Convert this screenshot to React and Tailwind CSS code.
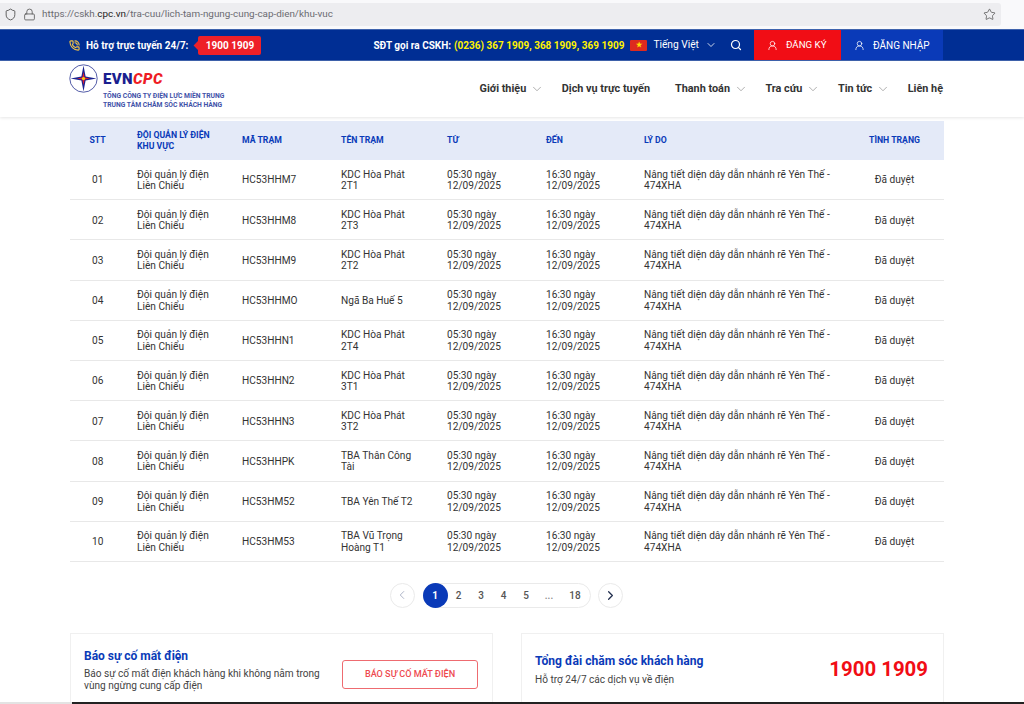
import { ChevronDown, ChevronLeft, ChevronRight, Lock, Search, Shield, Star, UserRound, PhoneCall } from "lucide-react";

const rows = [
  ["01", "HC53HHM7", "KDC Hòa Phát 2T1"],
  ["02", "HC53HHM8", "KDC Hòa Phát 2T3"],
  ["03", "HC53HHM9", "KDC Hòa Phát 2T2"],
  ["04", "HC53HHMO", "Ngã Ba Huế 5"],
  ["05", "HC53HHN1", "KDC Hòa Phát 2T4"],
  ["06", "HC53HHN2", "KDC Hòa Phát 3T1"],
  ["07", "HC53HHN3", "KDC Hòa Phát 3T2"],
  ["08", "HC53HHPK", "TBA Thân Công Tài"],
  ["09", "HC53HM52", "TBA Yên Thế T2"],
  ["10", "HC53HM53", "TBA Vũ Trọng Hoàng T1"],
];

const gridCols = "grid grid-cols-[67px_105px_99px_106px_99px_98px_201px_99px] items-center";

function Logo() {
  return (
    <svg width="29" height="29" viewBox="0 0 29 29" className="shrink-0">
      <circle cx="14.5" cy="14.5" r="13.7" fill="#fff" stroke="#3f4a9e" strokeWidth="0.9" />
      <path d="M14.5 1.5 L16.6 12.4 L27.5 14.5 L16.6 16.6 L14.5 27.5 L12.4 16.6 L1.5 14.5 L12.4 12.4 Z" fill="#1c2390" />
      <path d="M14.5 8 L15.6 13.4 L21 14.5 L15.6 15.6 L14.5 21 L13.4 15.6 L8 14.5 L13.4 13.4 Z" fill="#e8202a" />
      <circle cx="14.5" cy="14.5" r="1.6" fill="#f7d417" />
    </svg>
  );
}

function NavItem({ label, arrow = true }) {
  return (
    <div className="flex items-center gap-[4px] text-[10.85px] font-bold text-[#333]">
      {label}
      {arrow && <ChevronDown size={14} strokeWidth={1} className="text-[#777]" />}
    </div>
  );
}

export default function App() {
  return (
    <div className="w-[1024px] h-[704px] overflow-hidden bg-white [font-family:Roboto,sans-serif]">
      <div className="h-[702px] overflow-hidden flex flex-col">
        {/* browser bar */}
        <div className="h-[29px] shrink-0 bg-[#f9f9fb] flex items-center">
          <div className="w-[1001px] h-[23px] bg-[#ededf0] rounded-r-[3px] flex items-center pl-[4px] pr-[5px]">
            <Shield size={13} strokeWidth={1.5} className="text-[#444]" />
            <Lock size={13} strokeWidth={1.5} className="text-[#555] ml-[6px]" />
            <div className="ml-[6px] text-[9.9px] text-[#6b6b70] [font-family:'Open_Sans',sans-serif]">
              https://cskh.<span className="text-[#1c1c20]">cpc.vn</span>/tra-cuu/lich-tam-ngung-cung-cap-dien/khu-vuc
            </div>
            <Star size={13} strokeWidth={1.3} className="ml-auto text-[#444]" />
          </div>
        </div>

        {/* top bar */}
        <div className="h-[32px] shrink-0 bg-[#002e94] border-y border-[#3f63ad] flex items-center pl-[69px] text-white text-[10px] font-bold">
          <PhoneCall size={11} strokeWidth={2.4} className="text-[#f6c445]" />
          <span className="ml-[6px]">Hỗ trợ trực tuyến 24/7:</span>
          <div className="relative ml-[10px] h-[19px] w-[63px] bg-[#ee2028] rounded-[2px] flex items-center justify-center">
            <span className="absolute left-[-3px] top-[6px] w-[7px] h-[7px] rotate-45 bg-[#ee2028]" />
            <span className="relative">1900 1909</span>
          </div>
          <span className="ml-[112px]">SĐT gọi ra CSKH:</span>
          <span className="ml-[3px] text-[#fff200]">(0236) 367 1909, 368 1909, 369 1909</span>
          <div className="ml-[6px] w-[17px] h-[11px] bg-[#dd2a1f] rounded-[1px] flex items-center justify-center text-[#ffe000] text-[7px] leading-none">★</div>
          <span className="ml-[6px] font-normal text-[10.2px]">Tiếng Việt</span>
          <ChevronDown size={12} strokeWidth={1.6} className="ml-[6px]" />
          <Search size={12} strokeWidth={2.4} className="ml-[13px]" />
          <div className="ml-[12px] h-[30px] w-[87px] bg-[#f10d15] flex items-center pl-[13px] gap-[8px] font-normal text-[9.7px]">
            <UserRound size={11} strokeWidth={1.6} />
            <span>ĐĂNG KÝ</span>
          </div>
          <div className="h-[30px] w-[102px] bg-[#0a3ab8] flex items-center pl-[13px] gap-[8px] font-normal">
            <UserRound size={11} strokeWidth={1.6} />
            <span>ĐĂNG NHẬP</span>
          </div>
        </div>

        {/* main header */}
        <div className="h-[56px] shrink-0 flex items-center pl-[69px] pr-[81px] shadow-[0_1px_3px_rgba(0,0,0,0.1)]">
          <div className="flex gap-[5px] -mt-[4px]">
            <Logo />
            <div className="pt-[8px]">
              <div className="text-[15px] leading-[14px] font-black [font-family:'Liberation_Sans',sans-serif] tracking-[0.4px]">
                <span className="text-[#1a1f8f]">EVN</span>
                <span className="text-[#ee1c25] italic">CPC</span>
              </div>
              <div className="mt-[6px] text-[6.75px] leading-[9px] font-bold text-[#3f52a8] [font-family:'Liberation_Sans',sans-serif]">
                <div>TỔNG CÔNG TY ĐIỆN LỰC MIỀN TRUNG</div>
                <div>TRUNG TÂM CHĂM SÓC KHÁCH HÀNG</div>
              </div>
            </div>
          </div>
          <div className="ml-auto flex items-center gap-[17.5px] mt-[1px]">
            <NavItem label="Giới thiệu" />
            <div className="mr-[7.5px]">
              <NavItem label="Dịch vụ trực tuyến" arrow={false} />
            </div>
            <NavItem label="Thanh toán" />
            <NavItem label="Tra cứu" />
            <NavItem label="Tin tức" />
            <NavItem label="Liên hệ" arrow={false} />
          </div>
        </div>

        {/* table */}
        <div className="ml-[70px] w-[874px] mt-[4px]">
          <div className={`${gridCols} h-[39px] bg-[#e4eaf8] text-[8.7px] leading-[11px] font-bold text-[#0a3ab8]`}>
            <div className="pl-[19.5px]">STT</div>
            <div>ĐỘI QUẢN LÝ ĐIỆN<br />KHU VỰC</div>
            <div>MÃ TRẠM</div>
            <div>TÊN TRẠM</div>
            <div>TỪ</div>
            <div>ĐẾN</div>
            <div>LÝ DO</div>
            <div className="text-center">TÌNH TRẠNG</div>
          </div>
          {rows.map((row) => (
            <div key={row[0]} className={`${gridCols} h-[40.2px] pt-[1px] border-b border-[#e8e8e8] text-[10.15px] leading-[11.4px] text-[#333]`}>
              <div className="pl-[22px]">{row[0]}</div>
              <div>Đội quản lý điện<br />Liên Chiểu</div>
              <div>{row[1]}</div>
              <div className="w-[78px]">{row[2]}</div>
              <div>05:30 ngày<br />12/09/2025</div>
              <div>16:30 ngày<br />12/09/2025</div>
              <div>Nâng tiết diện dây dẫn nhánh rẽ Yên Thế -<br />474XHA</div>
              <div className="text-center">Đã duyệt</div>
            </div>
          ))}
        </div>

        {/* pagination */}
        <div className="w-[1012px] mt-[21px] flex justify-center items-center gap-[7px]">
          <div className="w-[25px] h-[25px] mr-[1px] rounded-full border border-[#eaeaea] flex items-center justify-center text-[#a9b0c4]">
            <ChevronLeft size={14} strokeWidth={1.6} />
          </div>
          <div className="h-[25px] w-[168px] rounded-full border border-[#eaeaea] flex items-center text-[10px] font-medium text-[#555]">
            <div className="w-[25px] h-[25px] -ml-[1px] rounded-full bg-[#0a3ab8] text-white font-bold flex items-center justify-center">1</div>
            <span className="ml-[4px] w-[14px] text-center">2</span>
            <span className="ml-[8.5px] w-[14px] text-center">3</span>
            <span className="ml-[8.5px] w-[14px] text-center">4</span>
            <span className="ml-[8.5px] w-[14px] text-center">5</span>
            <span className="ml-[9px] w-[14px] text-center text-[#888]">...</span>
            <span className="ml-[11px] w-[16px] text-center">18</span>
          </div>
          <div className="w-[25px] h-[25px] rounded-full border border-[#eaeaea] flex items-center justify-center text-[#23304f]">
            <ChevronRight size={15} strokeWidth={2} />
          </div>
        </div>

        {/* bottom cards */}
        <div className="ml-[70px] w-[874px] mt-[25px] flex justify-between">
          <div className="w-[423px] h-[80px] border border-[#f0f0f0] flex pl-[13px] pr-[14px]">
            <div className="pt-[15.5px] w-[245px]">
              <div className="text-[12px] leading-[15px] font-bold text-[#0a3ab8]">Báo sự cố mất điện</div>
              <div className="mt-[3.75px] text-[10.1px] leading-[11.5px] text-[#444]">Báo sự cố mất điện khách hàng khi không nằm trong vùng ngừng cung cấp điện</div>
            </div>
            <div className="ml-auto mt-[26px] w-[136px] h-[29px] border border-[#ee6b70] rounded-[3px] flex items-center justify-center text-[9.1px] font-medium text-[#ee4a50]">
              BÁO SỰ CỐ MẤT ĐIỆN
            </div>
          </div>
          <div className="w-[423px] h-[80px] border border-[#f0f0f0] flex items-start pl-[13px] pr-[15px]">
            <div className="pt-[20.5px]">
              <div className="text-[12.1px] leading-[15px] font-bold text-[#0a3ab8]">Tổng đài chăm sóc khách hàng</div>
              <div className="mt-[4px] text-[10.1px] leading-[13px] text-[#444]">Hỗ trợ 24/7 các dịch vụ về điện</div>
            </div>
            <div className="ml-auto mt-[23.5px] text-[20.4px] leading-[25px] font-bold text-[#f10d15]">1900 1909</div>
          </div>
        </div>
      </div>

      {/* window edge */}
      <div className="h-[2px] flex">
        <div className="w-[72px] bg-[#e3e3e3]" />
        <div className="flex-1 bg-[#222]" />
      </div>
    </div>
  );
}
